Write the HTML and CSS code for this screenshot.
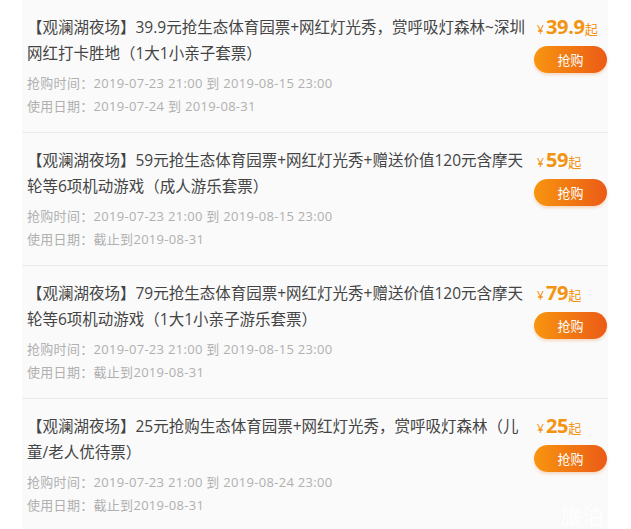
FILE: index.html
```html
<!DOCTYPE html>
<html lang="zh-CN">
  <head>
    <meta charset="UTF-8" />
    <meta name="viewport" content="width=device-width, initial-scale=1.0" />
    <title>观澜湖夜场</title>
    <link rel="stylesheet" href="styles.css">
  </head>
  <body>
    <div class="list">
      <div class="item">
        <div class="info">
          <p class="title">【观澜湖夜场】39.9元抢生态体育园票+网红灯光秀，赏呼吸灯森林~深圳网红打卡胜地（1大1小亲子套票）</p>
          <p class="meta">抢购时间：2019-07-23 21:00 到 2019-08-15 23:00</p>
          <p class="meta">使用日期：2019-07-24 到 2019-08-31</p>
        </div>
        <div class="buy">
          <p class="price"><span class="yen">¥</span><span class="num">39.9</span><span class="qi">起</span></p>
          <button class="btn">抢购</button>
        </div>
      </div>

      <div class="item">
        <div class="info">
          <p class="title">【观澜湖夜场】59元抢生态体育园票+网红灯光秀+赠送价值120元含摩天轮等6项机动游戏（成人游乐套票）</p>
          <p class="meta">抢购时间：2019-07-23 21:00 到 2019-08-15 23:00</p>
          <p class="meta">使用日期：截止到2019-08-31</p>
        </div>
        <div class="buy">
          <p class="price"><span class="yen">¥</span><span class="num">59</span><span class="qi">起</span></p>
          <button class="btn">抢购</button>
        </div>
      </div>

      <div class="item">
        <div class="info">
          <p class="title">【观澜湖夜场】79元抢生态体育园票+网红灯光秀+赠送价值120元含摩天轮等6项机动游戏（1大1小亲子游乐套票）</p>
          <p class="meta">抢购时间：2019-07-23 21:00 到 2019-08-15 23:00</p>
          <p class="meta">使用日期：截止到2019-08-31</p>
        </div>
        <div class="buy">
          <p class="price"><span class="yen">¥</span><span class="num">79</span><span class="qi">起</span></p>
          <button class="btn">抢购</button>
        </div>
      </div>

      <div class="item">
        <div class="info">
          <p class="title">【观澜湖夜场】25元抢购生态体育园票+网红灯光秀，赏呼吸灯森林（儿童/老人优待票）</p>
          <p class="meta">抢购时间：2019-07-23 21:00 到 2019-08-24 23:00</p>
          <p class="meta">使用日期：截止到2019-08-31</p>
        </div>
        <div class="buy">
          <p class="price"><span class="yen">¥</span><span class="num">25</span><span class="qi">起</span></p>
          <button class="btn">抢购</button>
        </div>
      </div>
    </div>

    <div class="watermark">旅泊网</div>
  </body>
</html>
```

FILE: styles.css
```css
* {
  margin: 0;
  padding: 0;
  box-sizing: border-box;
}

body {
  background-color: #fff;
  font-family: "Open Sans", "Noto Sans CJK SC", sans-serif;
  overflow: hidden;
  position: relative;
  height: 529px;
}

.list {
  margin-left: 22px;
  width: 586px;
}

.item {
  display: flex;
  background-color: #fafafa;
  border-bottom: 1px solid #ececec;
  padding: 14px 0 13px 5px;
  height: 133px;
}

.info {
  width: 505px;
}

.title {
  font-size: 15.5px;
  line-height: 26px;
  color: #444;
  margin-bottom: 6px;
}

.meta {
  font-size: 13px;
  line-height: 23px;
  color: #b0b0b0;
  letter-spacing: 0.3px;
}

.buy {
  flex: 1;
  display: flex;
  flex-direction: column;
  align-items: flex-end;
  padding-left: 1px;
}

.price {
  color: #f39312;
  line-height: 26px;
  width: 100%;
  padding-left: 4px;
  white-space: nowrap;
}

.price .yen {
  font-size: 12px;
  margin-right: 2px;
}

.price .num {
  font-size: 20px;
  font-weight: bold;
  letter-spacing: -0.3px;
}

.price .qi {
  font-size: 13px;
}

.btn {
  margin-top: 3px;
  width: 73px;
  height: 27px;
  border: none;
  border-radius: 14px;
  background: linear-gradient(90deg, #f8950f, #eb5b17);
  box-shadow: 0 2px 3px rgba(235, 120, 30, 0.25);
  color: #fff;
  font-family: "Noto Sans CJK SC", sans-serif;
  font-size: 13px;
  margin-right: 1px;
}

.watermark {
  position: absolute;
  left: 560px;
  top: 500px;
  font-family: "Noto Sans CJK SC", sans-serif;
  font-size: 21px;
  color: rgba(255, 255, 255, 0.95);
  letter-spacing: 2px;
  white-space: nowrap;
}
```
